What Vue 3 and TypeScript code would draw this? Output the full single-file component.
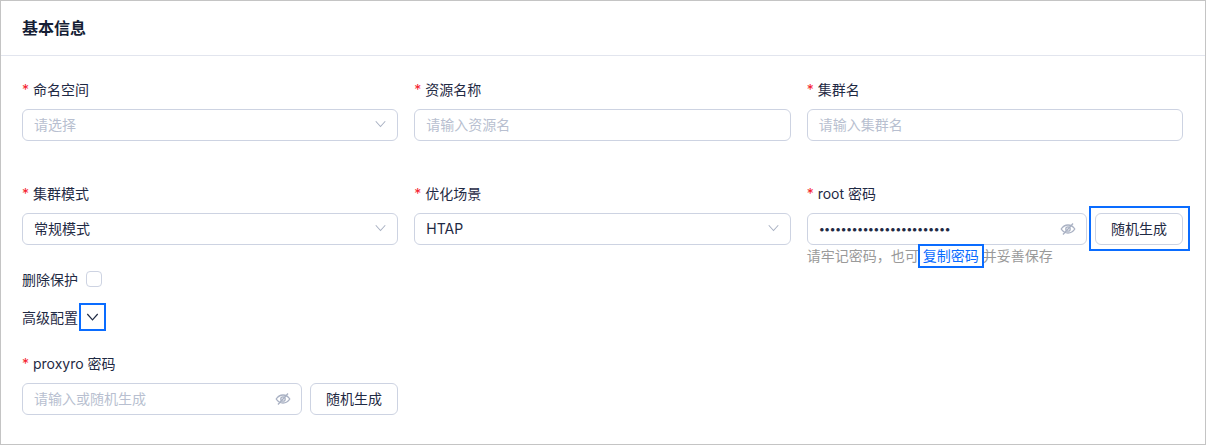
<script setup lang="ts">
interface SelectField { label: string; placeholder?: string; value?: string; type: 'select' | 'input'; }
const rowOne: SelectField[] = [
  { label: '命名空间', placeholder: '请选择', type: 'select' },
  { label: '资源名称', placeholder: '请输入资源名', type: 'input' },
  { label: '集群名', placeholder: '请输入集群名', type: 'input' },
];
const rowTwo: SelectField[] = [
  { label: '集群模式', value: '常规模式', type: 'select' },
  { label: '优化场景', value: 'HTAP', type: 'select' },
];
const dots = '•'.repeat(24);
</script>

<template>
  <section class="card">
    <header class="head">基本信息</header>
    <div class="body">
      <div class="grid row-one">
        <div v-for="f in rowOne" :key="f.label" class="field">
          <label class="label"><i class="req">*</i>{{ f.label }}</label>
          <div class="control">
            <span class="ph">{{ f.placeholder }}</span>
            <svg v-if="f.type === 'select'" class="chev" viewBox="0 0 12 8"><path d="M.8 1 6 6.8 11.2 1" /></svg>
          </div>
        </div>
      </div>
      <div class="grid row-two">
        <div v-for="f in rowTwo" :key="f.label" class="field">
          <label class="label"><i class="req">*</i>{{ f.label }}</label>
          <div class="control">
            <span class="val">{{ f.value }}</span>
            <svg class="chev" viewBox="0 0 12 8"><path d="M.8 1 6 6.8 11.2 1" /></svg>
          </div>
        </div>
        <div class="field">
          <label class="label"><i class="req">*</i>root 密码</label>
          <div class="pw-row">
            <div class="control grow">
              <span class="dots">{{ dots }}</span>
              <svg class="eye" viewBox="0 0 16 16"><path d="M1.200 8C3 5.300 5.300 4 8 4s5 1.300 6.800 4c-1.800 2.700-4.100 4-6.800 4S3 10.700 1.200 8Z" /><circle cx="8" cy="8" r="2.200" /><path d="M3 13.500 13 2.500" /></svg>
            </div>
            <button class="btn marked" type="button">随机生成</button>
          </div>
          <p class="hint">请牢记密码，也可<a class="copy">复制密码</a>并妥善保存</p>
        </div>
      </div>
      <div class="protect">
        <span>删除保护</span>
        <span class="check"></span>
      </div>
      <div class="advanced">
        <span>高级配置</span>
        <span class="toggle">
          <svg viewBox="0 0 12 8"><path d="M.8 1 6 6.800 11.200 1" /></svg>
        </span>
      </div>
      <div class="proxy">
        <label class="label"><i class="req">*</i>proxyro 密码</label>
        <div class="pw-row">
          <div class="control grow">
            <span class="ph">请输入或随机生成</span>
            <svg class="eye" viewBox="0 0 16 16"><path d="M1.200 8C3 5.300 5.300 4 8 4s5 1.300 6.800 4c-1.800 2.700-4.100 4-6.800 4S3 10.700 1.200 8Z" /><circle cx="8" cy="8" r="2.200" /><path d="M3 13.500 13 2.500" /></svg>
          </div>
          <button class="btn" type="button">随机生成</button>
        </div>
      </div>
    </div>
  </section>
</template>

<style scoped>
.card {
  box-sizing: border-box;
  width: 1206px;
  height: 445px;
  border: 1px solid #c4c4c4;
  background: #fff;
  color: #1f2a44;
  font-family: Inter, "Noto Sans CJK SC", sans-serif;
  font-size: 14px;
  overflow: hidden;
}
.head {
  box-sizing: border-box;
  height: 55px;
  padding: 0 21px 2px;
  display: flex;
  align-items: center;
  border-bottom: 1px solid #e2e5ee;
  font-size: 16px;
  font-weight: 700;
  color: #161e35;
}
.body { padding: 23px 22px 0 21px; }
.grid {
  display: grid;
  grid-template-columns: repeat(3, 1fr);
  column-gap: 16px;
}
.row-one { height: 104px; }
.row-two { height: 85px; }
.label {
  display: flex;
  align-items: center;
  height: 22px;
  margin-bottom: 8px;
  line-height: 22px;
}
.req {
  width: 11px;
  color: #f5222d;
  font-style: normal;
  font-size: 14px;
}
.control {
  box-sizing: border-box;
  height: 32px;
  padding: 0 11px 2px;
  display: flex;
  align-items: center;
  justify-content: space-between;
  border: 1px solid #cdd3e2;
  border-radius: 6px;
  background: #fff;
}
.grow { flex: 1; min-width: 0; }
.ph { color: #b8bfd0; }
.val { color: #1f2a44; }
.dots { color: #1f2a44; font-size: 11px; letter-spacing: -0.72px; padding-top: 2px; }
.chev { width: 11px; height: 8px; fill: none; stroke: #a9b1c3; stroke-width: 1.100; }
.eye { width: 16px; height: 16px; fill: none; stroke: #a9b1c3; stroke-width: 1.300; margin: 2px -1px 0 0; }
.pw-row { display: flex; gap: 8px; }
.btn {
  box-sizing: border-box;
  width: 88px;
  height: 32px;
  padding: 0 0 2px;
  border: 1px solid #cdd3e2;
  border-radius: 6px;
  background: #fff;
  color: #1f2a44;
  font: inherit;
}
.marked { position: relative; }
.marked::after {
  content: "";
  position: absolute;
  top: -8px;
  right: -8px;
  bottom: -7px;
  left: -7px;
  border: 2px solid #0a6cff;
}
.hint {
  margin: 1px 0 0;
  line-height: 20px;
  color: #9a9a9a;
  font-size: 14px;
}
.copy {
  position: relative;
  color: #0a6cff;
  margin: 0 4px 0 4px;
}
.copy::after {
  content: "";
  position: absolute;
  top: -3px;
  right: -5px;
  bottom: -4px;
  left: -5px;
  border: 2px solid #0a6cff;
}
.protect { display: flex; align-items: center; height: 22px; gap: 8px; }
.check {
  box-sizing: border-box;
  width: 16px;
  height: 16px;
  border: 1px solid #cdd3e2;
  border-radius: 4px;
}
.advanced { display: flex; align-items: center; height: 28px; margin-top: 13px; }
.toggle {
  box-sizing: border-box;
  width: 27px;
  height: 28px;
  margin-left: 1px;
  display: flex;
  align-items: center;
  justify-content: center;
  border: 2px solid #0a6cff;
}
.toggle svg { width: 13px; height: 8px; fill: none; stroke: #1f2a44; stroke-width: 1.200; }
.proxy { margin-top: 22px; width: 376px; }
</style>
